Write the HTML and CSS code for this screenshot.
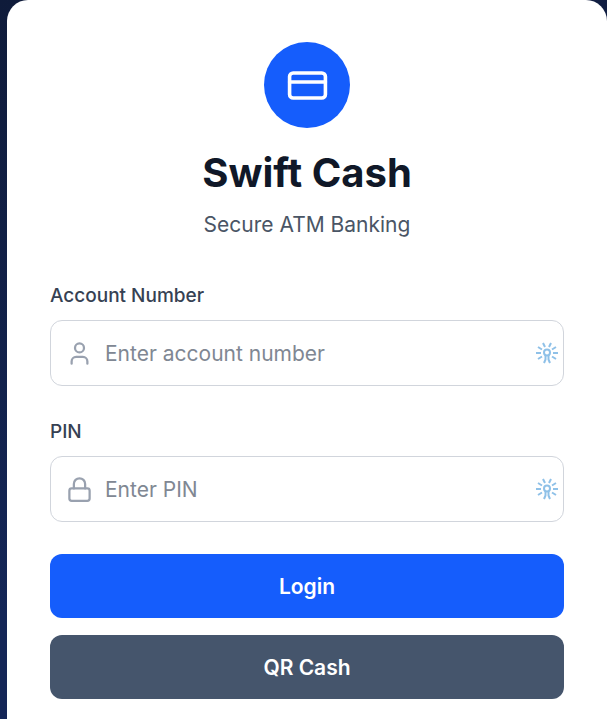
FILE: index.html
```html
<!DOCTYPE html>
<html lang="en">
<head>
  <meta charset="UTF-8">
  <meta name="viewport" content="width=device-width, initial-scale=1.0">
  <title>Swift Cash</title>
  <link rel="stylesheet" href="styles.css">
</head>
<body>
  <!-- Shared passkey glyph -->
  <svg class="sprite" aria-hidden="true">
    <symbol id="key" viewBox="0 0 22 22">
      <path d="M0 11h5M17 11h5M2 5l4 2.500M20 5l-4 2.500M2 17l4-2.500M20 17l-4-2.500M7 1l2 4M15 1l-2 4" />
      <circle cx="11" cy="10.500" r="3" />
      <path d="M9.500 13v4.500l-1.500 3.500M12.500 13v4.500l1.500 3.500" />
    </symbol>
  </svg>

  <main class="card">
    <header class="header">
      <div class="logo">
        <svg viewBox="0 0 24 24" aria-hidden="true">
          <rect x="2" y="5" width="20" height="14" rx="2" />
          <path d="M2 10h20" />
        </svg>
      </div>
      <h1>Swift Cash</h1>
      <p class="subtitle">Secure ATM Banking</p>
    </header>

    <form class="form">
      <div class="field">
        <label for="account">Account Number</label>
        <div class="input-box">
          <svg class="input-icon" viewBox="0 0 24 24" aria-hidden="true">
            <path d="M19 21v-2a4 4 0 0 0-4-4H9a4 4 0 0 0-4 4v2" />
            <circle cx="12" cy="7" r="4" />
          </svg>
          <input type="text" id="account" placeholder="Enter account number">
          <svg class="key-icon" aria-hidden="true"><use href="#key" /></svg>
        </div>
      </div>

      <div class="field">
        <label for="pin">PIN</label>
        <div class="input-box">
          <svg class="input-icon" viewBox="0 0 24 24" aria-hidden="true">
            <rect x="3" y="11" width="18" height="11" rx="2" />
            <path d="M7 11V7a5 5 0 0 1 10 0v4" />
          </svg>
          <input type="password" id="pin" placeholder="Enter PIN">
          <svg class="key-icon" aria-hidden="true"><use href="#key" /></svg>
        </div>
      </div>

      <div class="buttons">
        <button type="submit" class="btn btn-primary">Login</button>
        <button type="button" class="btn btn-secondary">QR Cash</button>
      </div>
    </form>
  </main>
</body>
</html>
```

FILE: styles.css
```css
* {
  margin: 0;
  padding: 0;
  box-sizing: border-box;
}

body {
  font-family: Inter, 'Liberation Sans', sans-serif;
  background: linear-gradient(165deg, #0f1b3a 0%, #142657 70%);
  min-height: 100vh;
  padding-left: 7px;
  display: flex;
}

svg {
  fill: none;
  stroke: currentColor;
  stroke-width: 2;
  stroke-linecap: round;
  stroke-linejoin: round;
}

.sprite {
  position: absolute;
  width: 0;
  height: 0;
}

.card {
  flex: 1;
  background: white;
  border-radius: 21px 21px 0 0;
  padding: 42px 43px 20px;
}

.header {
  text-align: center;
  margin-bottom: 41px;
}

.logo {
  width: 86px;
  height: 86px;
  margin: 0 auto 21px;
  border-radius: 50%;
  background: #155dfc;
  color: white;
  display: flex;
  align-items: center;
  justify-content: center;
}

.logo svg {
  width: 43px;
  height: 43px;
}

h1 {
  font-size: 40px;
  line-height: 48px;
  font-weight: 700;
  color: #101828;
  margin-bottom: 12px;
}

.subtitle {
  font-size: 21px;
  line-height: 32px;
  color: #4a5565;
}

.form,
.buttons {
  display: flex;
  flex-direction: column;
}

.form {
  gap: 32px;
}

.buttons {
  gap: 17px;
}

label {
  display: block;
  font-size: 19px;
  line-height: 27px;
  font-weight: 500;
  color: #364153;
  margin-bottom: 11px;
}

.input-box {
  display: flex;
  align-items: center;
  gap: 12px;
  height: 66px;
  padding: 0 5px 0 15px;
  border: 1px solid #d1d5dc;
  border-radius: 12px;
}

.input-box:focus-within {
  border-color: #155dfc;
}

.input-icon {
  flex: none;
  width: 27px;
  height: 27px;
  color: #99a1af;
}

.key-icon {
  flex: none;
  width: 22px;
  height: 22px;
  color: #8fc1e8;
  stroke-linecap: butt;
}

input {
  flex: 1;
  min-width: 0;
  height: 100%;
  border: none;
  outline: none;
  background: transparent;
  font: inherit;
  font-size: 21px;
  color: #101828;
}

input::placeholder {
  color: #808793;
}

.btn {
  height: 64px;
  border: none;
  border-radius: 12px;
  font: inherit;
  font-size: 21px;
  font-weight: 600;
  color: white;
  cursor: pointer;
}

.btn-primary {
  background: #155dfc;
}

.btn-primary:hover {
  background: #1447e6;
}

.btn-secondary {
  background: #45556c;
}

.btn-secondary:hover {
  background: #314158;
}
```
